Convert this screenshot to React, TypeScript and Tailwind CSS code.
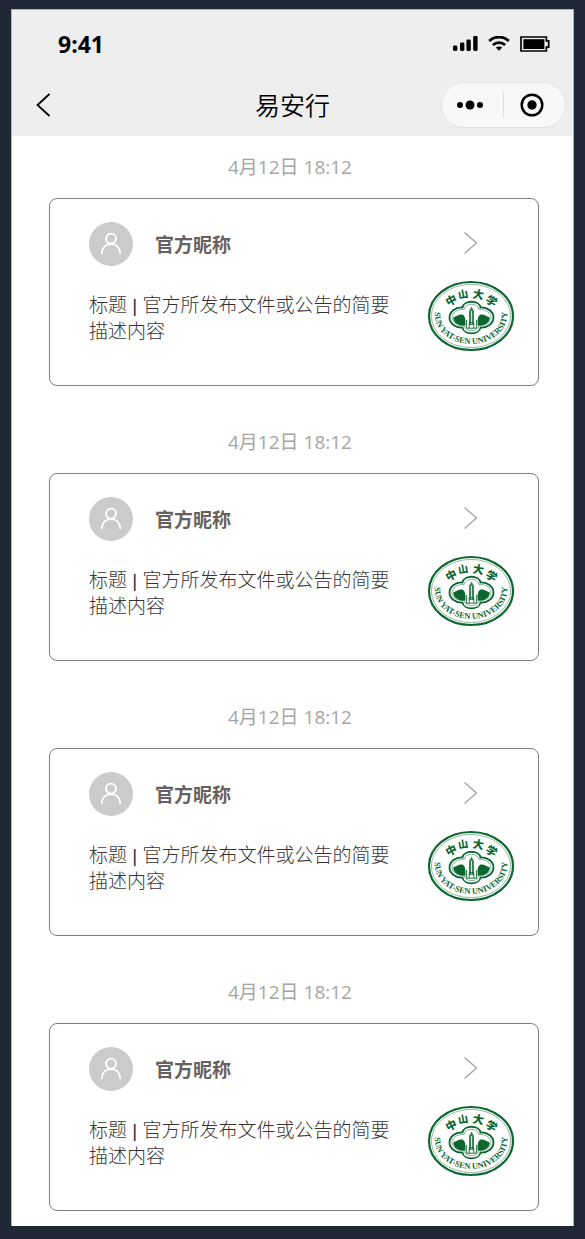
const notices = [
  { id: 1, date: '4月12日 18:12', author: '官方昵称', text: '标题 | 官方所发布文件或公告的简要描述内容' },
  { id: 2, date: '4月12日 18:12', author: '官方昵称', text: '标题 | 官方所发布文件或公告的简要描述内容' },
  { id: 3, date: '4月12日 18:12', author: '官方昵称', text: '标题 | 官方所发布文件或公告的简要描述内容' },
  { id: 4, date: '4月12日 18:12', author: '官方昵称', text: '标题 | 官方所发布文件或公告的简要描述内容' },
];

function SignalIcon() {
  return (
    <svg width="25" height="16" viewBox="0 0 25 16" aria-hidden="true">
      <rect x="0" y="9.6" width="4.4" height="5.4" rx="1.4" />
      <rect x="7" y="6.6" width="4.4" height="8.4" rx="1.4" />
      <rect x="13.4" y="3.4" width="4.4" height="11.6" rx="1.4" />
      <rect x="20.2" y="0" width="4.4" height="15" rx="1.4" />
    </svg>
  );
}

function WifiIcon() {
  return (
    <svg width="22" height="16" viewBox="0 0 22 16" fill="none" stroke="#000" aria-hidden="true">
      <path d="M1.2 5C6.6 -0.2 15.4 -0.2 20.8 5" strokeWidth="2.9" />
      <path d="M4.9 9C8.3 5.7 13.7 5.7 17.1 9" strokeWidth="2.7" />
      <path d="M11 14.8L7.8 11.6C9.5 10 12.5 10 14.2 11.6Z" fill="#000" stroke="none" />
    </svg>
  );
}

function BatteryIcon() {
  return (
    <svg width="30" height="16" viewBox="0 0 30 16" aria-hidden="true">
      <path d="M1 1H26.4V4.8H28.7V11.2H26.4V15H1Z" fill="none" stroke="#000" strokeWidth="1.7" />
      <rect x="3.4" y="3.2" width="21" height="9.8" />
    </svg>
  );
}

function Seal() {
  return (
    <svg
      width="88"
      height="72"
      viewBox="-1 -1 88 72"
      className="shrink-0 text-[#0b6630]"
      role="img"
      aria-label="中山大学"
    >
      <defs>
        <path id="seal-ring" d="M8.6 24.6A36.2 29.2 0 1 0 77.4 24.6" />
      </defs>
      <ellipse cx="43" cy="35" rx="42" ry="34" fill="#fff" stroke="currentColor" strokeWidth="2.2" />
      <ellipse cx="43" cy="35" rx="39.6" ry="31.6" fill="none" stroke="currentColor" strokeWidth="1" opacity="0.45" />
      <g
        fill="currentColor"
        fontSize="11"
        fontWeight="900"
        textAnchor="middle"
        className="font-['Noto_Sans_CJK_SC',sans-serif]"
      >
        <text transform="translate(25 23) rotate(-28)">中</text>
        <text transform="translate(35.6 17) rotate(-10)" fontSize="10">山</text>
        <text transform="translate(49.6 17.4) rotate(10)">大</text>
        <text transform="translate(61.4 23.6) rotate(30)">学</text>
      </g>
      <text
        fill="currentColor"
        fontSize="8.4"
        fontWeight="700"
        textAnchor="middle"
        className="font-['Liberation_Serif',serif]"
      >
        <textPath href="#seal-ring" startOffset="50%">SUN YAT-SEN UNIVERSITY</textPath>
      </text>
      <path
        d="M34.5 26.5C35.5 18.8 51.5 18.8 52.5 26.5C60 26 65.5 31 65.5 36.5C65.5 42 60 47 52.5 46.5C51.5 54.2 35.5 54.2 34.5 46.5C27 47 21.5 42 21.5 36.5C21.5 31 27 26 34.5 26.5Z"
        fill="#fff"
        stroke="currentColor"
        strokeWidth="1.8"
      />
      <path
        d="M36.2 28.4C37 21.6 50 21.6 50.8 28.4C58 28 63 32 63 36.5C63 41 58 45 50.8 44.6C50 51.4 37 51.4 36.2 44.6C29 45 24 41 24 36.5C24 32 29 28 36.2 28.4Z"
        fill="none"
        stroke="currentColor"
        strokeWidth="0.7"
        opacity="0.7"
      />
      <path d="M25.2 36.5C29 35 31.5 32.8 34.5 33.6C37 35 37.4 38 37.4 40.4V44.4C30.5 45.2 25.4 42 25.2 36.5Z" fill="currentColor" />
      <path d="M61.8 36.5C58 35 55.5 32.8 52.5 33.6C50 35 49.6 38 49.6 40.4V44.4C56.5 45.2 61.6 42 61.8 36.5Z" fill="currentColor" />
      <path d="M41 44V30L43.5 25.4L46 30V44Z" fill="currentColor" opacity="0.8" />
      <path d="M43.5 30V43" stroke="#fff" strokeWidth="0.8" />
      <path d="M38.4 39V47.2H48.6V39M41.2 47V41.6H45.8V47" fill="none" stroke="currentColor" strokeWidth="0.9" />
    </svg>
  );
}

function Avatar() {
  return (
    <span className="flex size-11 shrink-0 items-center justify-center rounded-full bg-[#cbcbcb]">
      <svg width="22" height="24" viewBox="0 0 22 24" fill="none" stroke="#fff" strokeWidth="1.9" strokeLinecap="round" aria-hidden="true">
        <circle cx="11" cy="6.6" r="5" />
        <path d="M1.8 21.2C2.2 15.4 6 12 11 12S19.8 15.4 20.2 21.2" />
      </svg>
    </span>
  );
}

function NoticeCard({ author, text }: { author: string; text: string }) {
  return (
    <article className="flex justify-between rounded-lg border border-[#808080] pt-[23px] pr-[23px] pb-[33px] pl-[39px]">
      <div className="flex w-[304px] flex-col gap-[27px]">
        <div className="flex items-center gap-[22px]">
          <Avatar />
          <h2 className="pt-0.5 text-[19px] leading-[26px] font-bold text-[#666060]">{author}</h2>
        </div>
        <p className="font-['Liberation_Sans','Noto_Sans_CJK_SC',sans-serif] text-[19px] leading-[26px] font-light text-[#383434]">
          {text}
        </p>
      </div>
      <div className="flex flex-col items-center gap-[25px] pt-[9px]">
        <button type="button" aria-label="查看详情" className="block">
          <svg width="16" height="24" viewBox="0 0 16 24" fill="none" stroke="#a6a6a6" strokeWidth="1.4" aria-hidden="true">
            <path d="M1.5 1.5L13.5 12L1.5 22.5" />
          </svg>
        </button>
        <Seal />
      </div>
    </article>
  );
}

export default function App() {
  return (
    <div
      lang="zh-CN"
      className="min-h-screen bg-[#202735] px-[11px] pt-[9px] pb-[13px] font-['Open_Sans','Noto_Sans_CJK_SC',sans-serif]"
    >
      <div className="border-x border-t border-[#aeb1b6] bg-white">
        <header className="bg-[#eeeeee] pb-1">
          <div className="flex h-[68px] items-center justify-between pr-[23px] pl-[46px]">
            <span className="text-[23px] leading-7 font-bold text-black">9:41</span>
            <div className="flex items-center gap-[10px]">
              <SignalIcon />
              <WifiIcon />
              <BatteryIcon />
            </div>
          </div>
          <nav className="grid h-[54px] grid-cols-[1fr_auto_1fr] items-center">
            <button type="button" aria-label="返回" className="ml-6 justify-self-start">
              <svg width="15" height="24" viewBox="0 0 15 24" fill="none" stroke="#000" strokeWidth="1.8" aria-hidden="true">
                <path d="M13.5 1L1.5 12L13.5 23" />
              </svg>
            </button>
            <h1 className="text-[25px] leading-8 font-[350] text-black">易安行</h1>
            <div className="mr-[7px] flex h-[46px] w-[125px] items-center justify-self-end rounded-full border border-[#e4e4e4] bg-[#f8f8f8]">
              <button type="button" aria-label="更多" className="flex h-full flex-1 items-center justify-center pr-1.5">
                <svg width="28" height="10" viewBox="0 0 28 10" aria-hidden="true">
                  <circle cx="4" cy="5" r="3" />
                  <circle cx="14" cy="5" r="4.5" />
                  <circle cx="24" cy="5" r="3" />
                </svg>
              </button>
              <span className="h-[26px] w-px bg-[#dedede]" />
              <button type="button" aria-label="关闭" className="flex h-full flex-1 items-center justify-center pr-1.5">
                <svg width="24" height="24" viewBox="0 0 24 24" aria-hidden="true">
                  <circle cx="12" cy="12" r="10.3" fill="none" stroke="#000" strokeWidth="2.5" />
                  <circle cx="12" cy="12" r="4.7" />
                </svg>
              </button>
            </div>
          </nav>
        </header>
        <main className="flex flex-col gap-[43px] pt-[18px] pr-[34px] pb-[15px] pl-[37px]">
          {notices.map((notice) => (
            <section key={notice.id} className="flex flex-col gap-[18px]">
              <time className="pr-2 text-center text-[19px] leading-[26px] text-[#a6a6a6]">{notice.date}</time>
              <NoticeCard author={notice.author} text={notice.text} />
            </section>
          ))}
        </main>
      </div>
    </div>
  );
}
